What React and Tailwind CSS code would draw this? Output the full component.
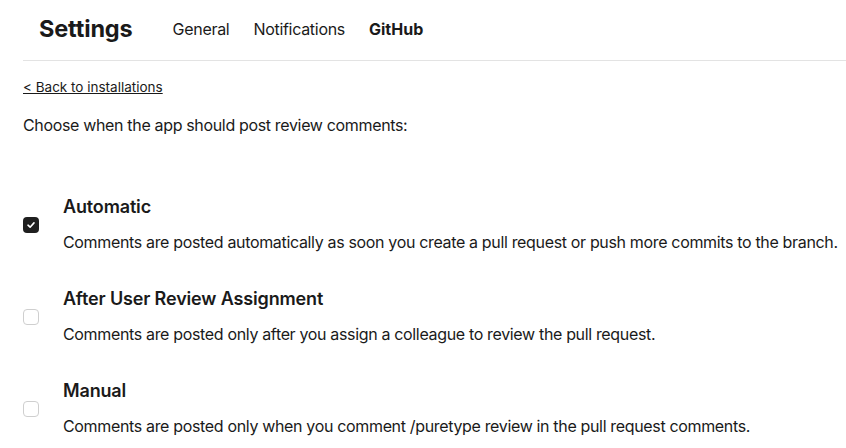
import React from "react";

const options = [
  {
    title: "Automatic",
    desc: "Comments are posted automatically as soon you create a pull request or push more commits to the branch.",
    checked: true,
  },
  {
    title: "After User Review Assignment",
    desc: "Comments are posted only after you assign a colleague to review the pull request.",
    checked: false,
  },
  {
    title: "Manual",
    desc: "Comments are posted only when you comment /puretype review in the pull request comments.",
    checked: false,
  },
];

const Checkbox = ({ checked }) =>
  checked ? (
    <div className="w-4 h-4 rounded-[4px] bg-[#1f1f1f] flex items-center justify-center">
      <svg width="10" height="10" viewBox="0 0 10 10" fill="none">
        <path d="M2 5.2L4.1 7.2L8 2.9" stroke="white" strokeWidth="1.6" strokeLinecap="round" strokeLinejoin="round" />
      </svg>
    </div>
  ) : (
    <div className="w-4 h-4 rounded-[4px] border border-[#cfcfcf] bg-white"></div>
  );

export default function App() {
  return (
    <div className="pl-[23px] text-[#1a1a1a] font-['Inter',sans-serif] bg-white h-[448px] overflow-hidden">
      <div className="flex items-center h-[61px] border-b border-[#e3e3e3] pl-4 pb-[3px]">
        <h1 className="text-[23.5px] font-bold mr-10 tracking-[-0.15px]">Settings</h1>
        <nav className="flex gap-6 text-base tracking-[-0.3px]">
          <span>General</span>
          <span>Notifications</span>
          <span className="font-bold tracking-[0px]">GitHub</span>
        </nav>
      </div>

      <div className="pt-4 text-[13.5px] leading-5">
        <a href="#" className="underline">&lt; Back to installations</a>
      </div>
      <p className="mt-4 text-base leading-6 tracking-[-0.34px]">Choose when the app should post review comments:</p>

      <div className="mt-[58px] flex flex-col gap-[33px]">
        {options.map((o) => (
          <div key={o.title} className="flex items-center">
            <div className="w-10 shrink-0">
              <Checkbox checked={o.checked} />
            </div>
            <div>
              <div className="text-lg font-semibold leading-6 tracking-[-0.15px]">{o.title}</div>
              <div className="mt-[11px] text-base leading-6 tracking-[-0.34px] whitespace-nowrap">{o.desc}</div>
            </div>
          </div>
        ))}
      </div>
    </div>
  );
}
